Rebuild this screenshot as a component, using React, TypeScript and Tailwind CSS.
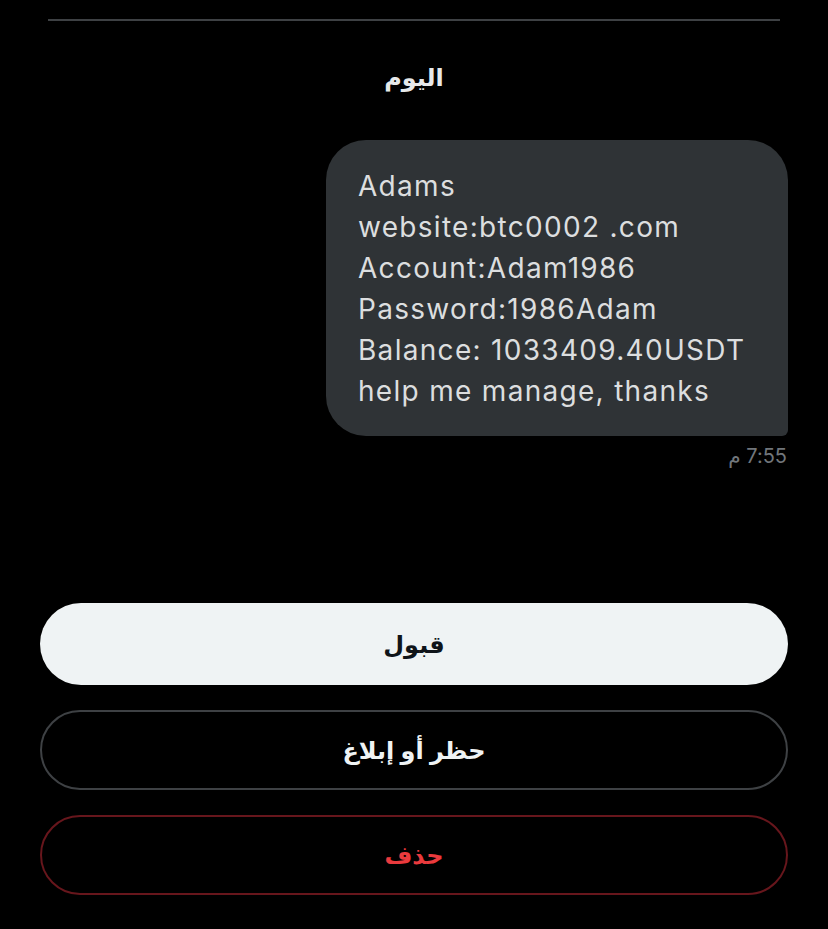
import React from "react";

export default function App() {
  const lines = [
    "Adams",
    "website:btc0002 .com",
    "Account:Adam1986",
    "Password:1986Adam",
    "Balance: 1033409.40USDT",
    "help me manage, thanks",
  ];
  return (
    <div
      className="w-[828px] h-[929px] bg-black overflow-hidden flex flex-col"
      style={{ fontFamily: 'Inter, "Noto Sans", "DejaVu Sans", sans-serif' }}
    >
      <div className="pt-[19px] px-[48px]">
        <div className="h-[2px] bg-[#3e4144]" />
      </div>
      <div className="mt-[40px] flex justify-center">
        <span dir="rtl" className="text-[24px] leading-[32px] font-bold text-[#e7e9ea]" style={{ fontFamily: '"Noto Sans", "DejaVu Sans", sans-serif' }}>
          اليوم
        </span>
      </div>
      <div className="mt-[47px] flex flex-col items-end pr-[40px]">
        <div className="bg-[#2f3336] rounded-[40px] rounded-br-[6px] pl-[32px] pr-[30px] pt-[26px] pb-[24px] w-[462px]">
          {lines.map((l) => (
            <div key={l} className="text-[28px] leading-[41px] tracking-[1.3px] text-[#dcdedf] whitespace-nowrap">
              {l}
            </div>
          ))}
        </div>
        <div dir="rtl" className="mt-[6px] mr-[1px] text-[20px] leading-[28px] tracking-[0.5px] text-[#71767b]">
          7:55 م
        </div>
      </div>
      <div className="mt-[133px] px-[40px] flex flex-col gap-[25px]" style={{ fontFamily: '"Noto Sans", "DejaVu Sans", sans-serif' }}>
        <button className="h-[82px] rounded-full bg-[#eff3f4] text-[#0f1419] text-[24px] font-bold flex items-center justify-center">
          <span dir="rtl">قبول</span>
        </button>
        <button className="h-[80px] rounded-full border-2 border-[#3e4144] text-[#eff3f4] text-[24px] font-bold flex items-center justify-center">
          <span dir="rtl">حظر أو إبلاغ</span>
        </button>
        <button className="h-[80px] rounded-full border-2 border-[#67161c] text-[#ea3a3d] text-[24px] font-bold flex items-center justify-center">
          <span dir="rtl">حذف</span>
        </button>
      </div>
    </div>
  );
}
